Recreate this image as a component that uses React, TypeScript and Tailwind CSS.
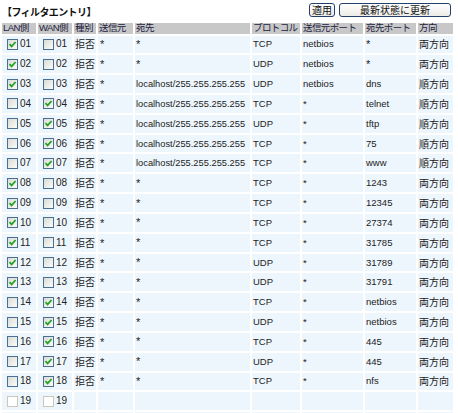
import React from "react";

type Row = {
  n: string;
  lan: boolean;
  wan: boolean;
  kind: string;
  src: string;
  dst: string;
  proto: string;
  sport: string;
  dport: string;
  dir: string;
  disabled?: boolean;
  blank?: boolean;
};

const LH = "localhost/255.255.255.255";

const data: [boolean, boolean, string, string, string, string, string][] = [
  [true, false, "*", "TCP", "netbios", "*", "両方向"],
  [true, false, "*", "UDP", "netbios", "*", "両方向"],
  [true, false, LH, "UDP", "netbios", "dns", "順方向"],
  [false, true, LH, "TCP", "*", "telnet", "順方向"],
  [false, true, LH, "UDP", "*", "tftp", "順方向"],
  [false, true, LH, "TCP", "*", "75", "順方向"],
  [false, true, LH, "TCP", "*", "www", "順方向"],
  [true, false, "*", "TCP", "*", "1243", "両方向"],
  [true, false, "*", "TCP", "*", "12345", "両方向"],
  [true, false, "*", "TCP", "*", "27374", "両方向"],
  [true, false, "*", "TCP", "*", "31785", "両方向"],
  [true, false, "*", "UDP", "*", "31789", "両方向"],
  [true, false, "*", "UDP", "*", "31791", "両方向"],
  [false, true, "*", "TCP", "*", "netbios", "両方向"],
  [false, true, "*", "UDP", "*", "netbios", "両方向"],
  [false, true, "*", "TCP", "*", "445", "両方向"],
  [false, true, "*", "UDP", "*", "445", "両方向"],
  [false, true, "*", "TCP", "*", "nfs", "両方向"],
];

const rows: Row[] = [
  ...data.map((d, i) => ({
    n: String(i + 1).padStart(2, "0"),
    lan: d[0],
    wan: d[1],
    kind: "拒否",
    src: "*",
    dst: d[2],
    proto: d[3],
    sport: d[4],
    dport: d[5],
    dir: d[6],
  })),
  { n: "19", lan: false, wan: false, kind: "", src: "", dst: "", proto: "", sport: "", dport: "", dir: "", disabled: true },
  { n: "20", lan: false, wan: false, kind: "", src: "", dst: "", proto: "", sport: "", dport: "", dir: "", disabled: true, blank: true },
];

function Cb({ checked, disabled }: { checked: boolean; disabled?: boolean }) {
  return (
    <span
      className={
        "inline-flex items-center justify-center w-[11px] h-[11px] shrink-0 border " +
        (disabled
          ? "border-[#cac8bb] bg-white"
          : "border-[#4a6f94] bg-gradient-to-br from-[#dcdcd6] to-[#fbfbf8]")
      }
    >
      {checked && (
        <svg width="9" height="9" viewBox="0 0 9 9">
          <path d="M1.5 4.2 L3.6 6.4 L7.6 2" fill="none" stroke="#21a121" strokeWidth="1.7" />
        </svg>
      )}
    </span>
  );
}

const FONT = { fontFamily: '"Liberation Sans", "Noto Sans CJK JP", sans-serif' };
const CJK = { fontFamily: '"Noto Sans CJK JP", sans-serif' };

const headers = ["LAN側", "WAN側", "種別", "送信元", "宛先", "プロトコル", "送信元ポート", "宛先ポート", "方向"];

export default function App() {
  return (
    <div className="w-[458px] h-[413px] bg-white overflow-hidden text-[#222]" style={FONT}>
      <div className="flex items-start h-[21px]">
        <div className="pl-[2px] pt-[5px] text-[10px] leading-[14px] font-bold text-[#111] tracking-[-0.6px]" style={CJK}>
          【フィルタエントリ】
        </div>
        <div className="ml-auto flex gap-[4px] pt-[3px] pr-[7px]">
          <button
            className="w-[26px] h-[14px] border border-[#22406a] rounded-[3px] bg-gradient-to-b from-white to-[#ecebe6] text-[10px] leading-[12px] text-[#111] flex items-center justify-center"
            style={CJK}
          >
            適用
          </button>
          <button
            className="w-[112px] h-[14px] border border-[#22406a] rounded-[3px] bg-gradient-to-b from-white to-[#ecebe6] text-[10px] leading-[12px] text-[#111] flex items-center justify-center"
            style={CJK}
          >
            最新状態に更新
          </button>
        </div>
      </div>
      <table className="border-separate border-spacing-[2px] table-fixed w-[455px] text-[10px]">
        <colgroup>
          <col className="w-[34px]" />
          <col className="w-[34px]" />
          <col className="w-[22px]" />
          <col className="w-[35px]" />
          <col className="w-[115px]" />
          <col className="w-[48px]" />
          <col className="w-[61px]" />
          <col className="w-[51px]" />
          <col className="w-[35px]" />
        </colgroup>
        <thead>
          <tr className="h-[10.5px] text-[#1c1c40]">
            {headers.map((h) => (
              <th
                key={h}
                className="p-0 pl-[1px] text-left font-normal text-[9.5px] leading-[10px] whitespace-nowrap tracking-[-0.6px] bg-[#c8c8c8]"
                style={FONT}
              >
                {h}
              </th>
            ))}
          </tr>
        </thead>
        <tbody>
          {rows.map((r) => (
            <tr key={r.n} className="h-[17.83px]">
              <td className="p-0 bg-[#eef6fd]">
                {!r.blank && (
                  <div className="flex items-center pl-[5px] gap-[2px] text-[10px] leading-[10px]">
                    <Cb checked={r.lan} disabled={r.disabled} />
                    <span>{r.n}</span>
                  </div>
                )}
              </td>
              <td className="p-0 bg-[#eef6fd]">
                {!r.blank && (
                  <div className="flex items-center pl-[5px] gap-[2px] text-[10px] leading-[10px]">
                    <Cb checked={r.wan} disabled={r.disabled} />
                    <span>{r.n}</span>
                  </div>
                )}
              </td>
              <td className="p-0 pl-[1px] bg-[#eef6fd] text-[10px] leading-[10px] whitespace-nowrap" style={CJK}>
                {r.kind}
              </td>
              <td className="p-0 pl-[2px] bg-[#eef6fd] text-[11px] leading-[10px]">{r.src}</td>
              <td className="p-0 pl-[1px] bg-[#eef6fd] text-[9.3px] leading-[10px] whitespace-nowrap">
                {r.dst === "*" ? <span className="text-[11px]">*</span> : r.dst}
              </td>
              <td className="p-0 pl-[1px] bg-[#eef6fd] text-[9.5px] leading-[10px]">{r.proto}</td>
              <td className="p-0 pl-[1px] bg-[#eef6fd] text-[9.5px] leading-[10px]">{r.sport}</td>
              <td className="p-0 pl-[1px] bg-[#eef6fd] text-[9.5px] leading-[10px]">
                {r.dport === "*" ? <span className="text-[11px]">*</span> : r.dport}
              </td>
              <td className="p-0 pl-[1px] bg-[#eef6fd] text-[10px] leading-[10px] whitespace-nowrap" style={CJK}>
                {r.dir}
              </td>
            </tr>
          ))}
        </tbody>
      </table>
    </div>
  );
}
